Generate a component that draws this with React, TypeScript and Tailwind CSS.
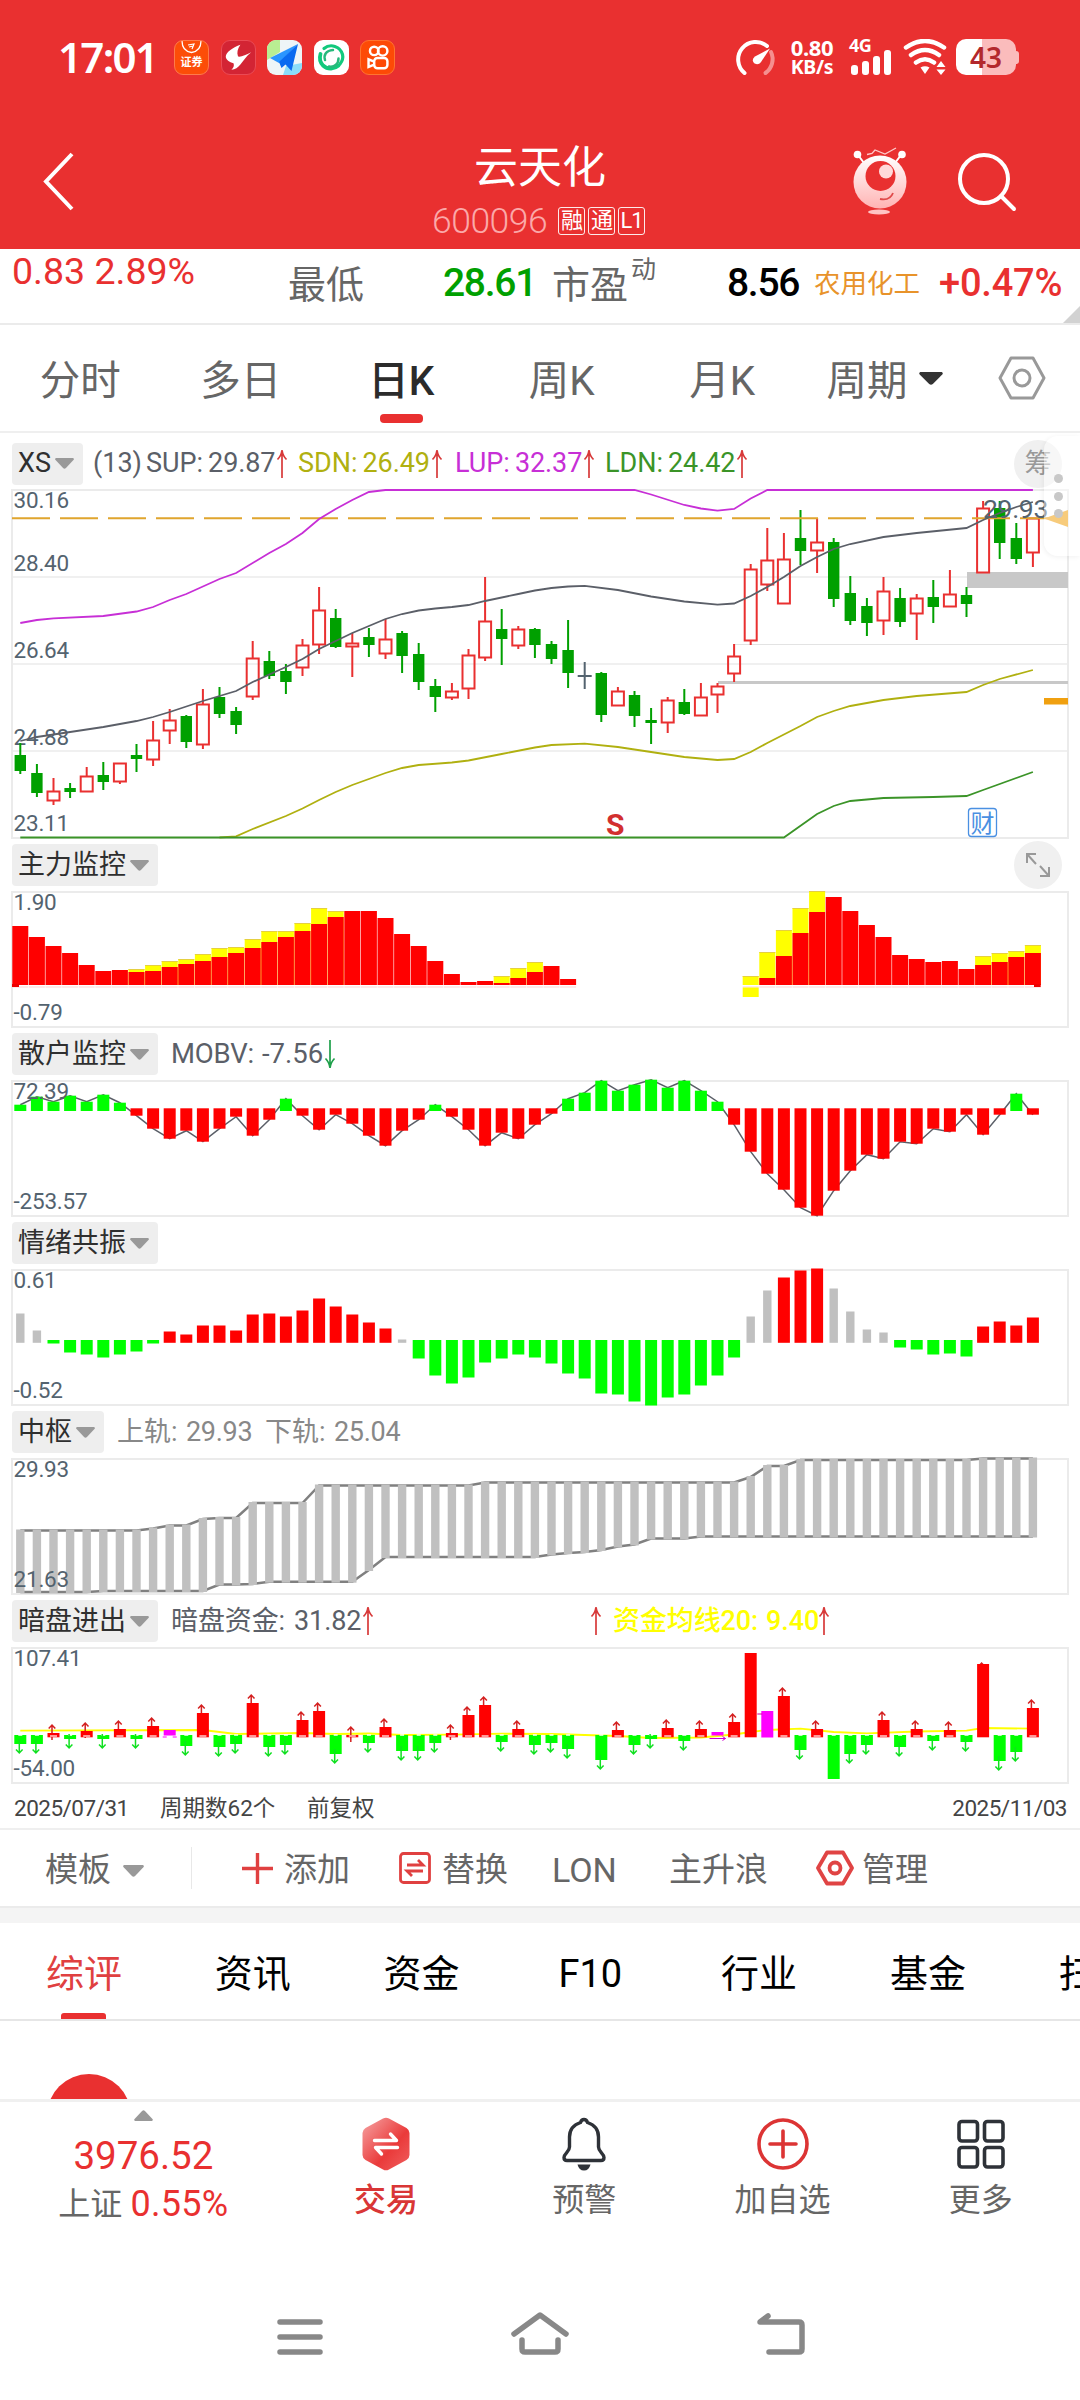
import React from 'react';

const UP = '#e93030';
const DOWN = '#00a000';
const LIME = '#00ff00';

// x center of the i-th bar
const cx = (i: number) => 20.3 + i * 16.6;

type Candle = [string, number, number, number, number];

// color, high, body top, body bottom, low
const candles: Candle[] = [
  ['g', 253, 265, 281, 284], ['g', 274, 283, 303, 307], ['r', 288, 301, 311, 315], ['g', 293, 298, 302, 308],
  ['r', 277, 286, 302, 302], ['g', 272, 285, 292, 300], ['r', 273, 273, 292, 294], ['g', 254, 265, 269, 282],
  ['r', 231, 250, 270, 276], ['r', 219, 230, 241, 254], ['g', 225, 226, 252, 258], ['r', 199, 214, 255, 259],
  ['g', 197, 207, 224, 228], ['g', 217, 221, 235, 244], ['r', 151, 168, 207, 210], ['g', 161, 171, 186, 189],
  ['g', 174, 181, 192, 204], ['r', 149, 155, 178, 186], ['r', 97, 120, 155, 164], ['g', 119, 128, 157, 158],
  ['r', 143, 153, 157, 187], ['g', 138, 147, 155, 167], ['r', 129, 149, 164, 169], ['g', 141, 143, 166, 183],
  ['g', 153, 164, 192, 200], ['g', 189, 196, 207, 222], ['r', 193, 201, 208, 210], ['r', 159, 165, 199, 209],
  ['r', 87, 131, 168, 171], ['g', 119, 139, 149, 175], ['r', 136, 139, 156, 159], ['g', 138, 139, 155, 168],
  ['g', 151, 154, 169, 174], ['g', 130, 160, 183, 198], ['n', 172, 185, 187, 199], ['g', 182, 183, 225, 232],
  ['r', 197, 201, 216, 216], ['g', 201, 205, 226, 237], ['g', 218, 230, 233, 254], ['r', 207, 210, 233, 243],
  ['g', 199, 212, 224, 225], ['r', 193, 207, 226, 226], ['r', 193, 196, 205, 223], ['r', 154, 166, 184, 192],
  ['r', 74, 79, 151, 155], ['r', 38, 70, 95, 101], ['r', 43, 69, 114, 114], ['g', 20, 48, 61, 75],
  ['r', 28, 52, 61, 83], ['g', 48, 52, 109, 117], ['g', 86, 103, 131, 135], ['g', 108, 116, 133, 146],
  ['r', 87, 101, 131, 145], ['g', 98, 108, 132, 137], ['r', 104, 108, 124, 150], ['g', 90, 107, 117, 133],
  ['r', 80, 104, 117, 117], ['g', 97, 105, 114, 127], ['r', 11, 18, 83, 83], ['g', 11, 18, 53, 69],
  ['g', 33, 48, 69, 74], ['r', 28, 28, 63, 77],
];

type Pt = [number, number];

const sup: Pt[] = [
  [0, 251], [1, 247], [3, 242], [5, 237], [7, 231], [8, 227], [9, 222], [11, 211], [13, 201], [14, 192], [16, 177], [17, 169],
  [18, 159], [19, 151], [20, 143], [22, 129], [23, 124], [24, 120.5], [25, 118.5], [26, 117], [27, 115], [28, 111], [30, 104],
  [31, 100.5], [32, 98], [33, 96.5], [34, 95.8], [36, 100], [38, 106.5], [40, 111.5], [42, 114.6], [43, 113.5], [44, 106], [45, 97],
  [46, 87], [47, 76], [48, 67], [49, 59], [50, 54], [52, 47], [54, 43], [57, 38], [58, 30], [59, 23], [60, 17], [61, 12],
];
const lup: Pt[] = [
  [0, 133], [1, 130], [2, 128.3], [5, 126], [7, 121.5], [8, 117], [9, 110], [10, 104], [12, 89], [13, 83], [15, 63], [16, 54],
  [17, 43], [18, 29], [19, 19], [20, 10], [21, 2], [22, 0], [37, 0], [38, 4.5], [40, 15], [41, 18.5], [42, 20.7], [43, 19],
  [44, 8.5], [45, 0], [61, 0],
];
const sdn: Pt[] = [
  [12, 347.5], [13, 346.3], [14, 339], [16, 326], [17, 318.5], [18, 310], [19, 302], [20, 295], [21, 289], [22, 283], [23, 278],
  [24, 275], [26, 272.5], [27, 270.5], [29, 264], [31, 257.5], [32, 255], [34, 253.7], [36, 257], [38, 262], [40, 267], [42, 270],
  [43, 269], [44, 262], [45, 253], [47, 236], [48, 227], [49, 221], [50, 216], [52, 210], [54, 206], [57, 202], [58, 195],
  [59, 189], [61, 180],
];
const ldn: Pt[] = [
  [0, 347.5], [46, 347.5], [48, 324], [49, 316], [50, 311], [52, 308], [55, 307], [57, 306], [58, 300], [59, 294], [61, 282],
];

// [index, red height, yellow height]
const mainForce: [number, number, number][] = [
  [0, 59, 0], [1, 48, 0], [2, 39, 0], [3, 32, 0], [4, 20, 0], [5, 14, 0], [6, 15, 0], [7, 13, 16], [8, 14, 20], [9, 18, 24],
  [10, 21, 26], [11, 24, 31], [12, 28, 37], [13, 32, 38], [14, 37, 46], [15, 43, 54], [16, 48, 54], [17, 54, 62], [18, 61, 77],
  [19, 68, 74], [20, 74, 0], [21, 74, 0], [22, 67, 0], [23, 51, 0], [24, 39, 0], [25, 24, 0], [26, 11, 0], [27, 3, 0], [28, 4, 0],
  [29, 2, 9], [30, 7, 17], [31, 13, 23], [32, 19, 0], [33, 6, 0], [44, 0, 9], [45, 7, 33], [46, 29, 55], [47, 52, 77],
  [48, 73, 94], [49, 88, 0], [50, 74, 0], [51, 60, 0], [52, 48, 0], [53, 30, 0], [54, 26, 0], [55, 23, 0], [56, 24, 0],
  [57, 16, 0], [58, 20, 29], [59, 23, 32], [60, 28, 34], [61, 32, 40],
];

const mobv = [
  5, 13, 8, 14, 8, 15, 7, -6, -19, -29, -21, -32, -19, -7, -26, -10, 11, -6, -20, -5, -14, -26, -36, -21, -10, 5, -7, -20, -36,
  -23, -29, -15, -4, 11, 17, 29, 19, 25, 30, 22, 29, 19, 8, -15, -42, -64, -80, -98, -106, -81, -61, -45, -49, -32, -34, -19,
  -22, -5, -25, -5, 16, -5,
];

const mood = [
  28, 11, -2, -11, -13, -16, -13, -10, -2, 10, 7, 16, 16, 11, 27, 28, 25, 31, 43, 35, 27, 19, 13, 2, -17, -34, -42, -36, -21,
  -17, -13, -16, -22, -32, -37, -52, -53, -60, -64, -56, -53, -44, -34, -16, 25, 51, 64, 71, 73, 53, 30, 12, 9, -6, -8, -13,
  -12, -15, 15, 20, 16, 24,
];
const moodGray = [0, 1, 23, 44, 45, 49, 50, 51, 52];

// runs of [last index, y]
const upperRuns: Pt[] = [[7, 71.5], [8, 69.5], [10, 66.5], [11, 60], [13, 59], [17, 44], [27, 26.5], [43, 23.5], [44, 18], [46, 7], [57, 1], [61, -0.5]];
const lowerRuns: Pt[] = [[4, 133], [11, 132], [13, 125.5], [14, 125], [20, 122.7], [21, 111], [31, 98], [32, 95.5], [33, 94], [34, 93], [35, 91], [36, 87.5], [37, 85.5], [40, 79.5], [61, 77.5]];
const expand = (runs: Pt[]) => Array.from({ length: 62 }, (_, i) => runs.find(([end]) => i <= end)![1]);

const dark = [
  -8, -8, 3, -3, 5, -3, 7, -3, 10, 6, -10, 23, -11, -8, 33, -11, -9, 16, 25, -18, 1, -7, 9, -15, -15, -7, 3, 21, 31, -6, 7, -9,
  -7, -13, 0, -24, 6, -9, -3, 8, -5, 7, 4, 14, 83, 25, 40, -14, 7, -43, -18, -9, 16, -11, 7, -5, 6, -6, 72, -25, -16, 28,
];
const darkMa: Pt[] = [
  [0, 82.7], [11, 82], [12, 84], [13, 86], [17, 85], [19, 86], [21, 85.5], [23, 87], [26, 86.7], [29, 85.7], [32, 86], [34, 87],
  [36, 88], [38, 90], [41, 89.5], [43, 86.5], [44, 84], [45, 82], [47, 80.7], [49, 84], [51, 85.3], [54, 83.5], [57, 82.7],
  [58, 80], [61, 80.7],
];

const toPoints = (pts: Pt[]) => pts.map(([i, y]) => `${cx(i)},${y}`).join(' ');

const Caret = ({ className = 'text-[#999]', w = 19, h = 11 }: { className?: string; w?: number; h?: number }) => (
  <svg width={w} height={h} viewBox="0 0 20 12" preserveAspectRatio="none" className={className}>
    <path d="M1 0h18q1.5 1 .4 2.300L11.500 11q-1.500 1.500-3 0L.6 2.300Q-.5 1 1 0z" fill="currentColor" />
  </svg>
);

const Arrow = ({ down = false }: { down?: boolean }) => (
  <svg width="12" height="30" viewBox="0 0 12 30" className={down ? 'rotate-180 text-[#1fa04b]' : 'text-[#d83a3a]'}>
    <path d="M6 1v28M1.500 10.500C4 8 5.500 5 6 1c.5 4 2 7 4.500 9.500" fill="none" stroke="currentColor" strokeWidth="1.700" />
  </svg>
);

const Chip = ({ text }: { text: string }) => (
  <div className="ml-3 flex h-[42px] shrink-0 items-center gap-1 rounded-[4px] bg-[#eeeeee] pr-[9px] pl-[6px] text-[27px] text-[#2f2f2f]">
    <span>{text}</span>
    <Caret />
  </div>
);

const Frame = ({ h, top, bottom, children }: { h: number; top: string; bottom: string; children: React.ReactNode }) => (
  <svg width="1080" height={h} viewBox={`0 0 1080 ${h}`} className="block overflow-visible">
    <rect x="12" y="0" width="1056" height={h} fill="none" stroke="#ebebeb" strokeWidth="2" />
    {children}
    <g fill="#54636f" fontSize="22.500" letterSpacing="-0.200">
      <text x="13.500" y="18">{top}</text>
      <text x="13.500" y={h - 7}>{bottom}</text>
    </g>
  </svg>
);

interface PanelProps {
  name: string;
  top: string;
  bottom: string;
  legend?: React.ReactNode;
  extra?: React.ReactNode;
  children: React.ReactNode;
}

const Panel: React.FC<PanelProps> = ({ name, top, bottom, legend, extra, children }) => (
  <section className="h-[189px] pt-[6px]">
    <div className="mb-[6px] flex items-center">
      <Chip text={name} />
      {legend}
      {extra}
    </div>
    <Frame h={135} top={top} bottom={bottom}>{children}</Frame>
  </section>
);

const StatusBar = () => (
  <div className="flex h-[114px] items-center pl-[58px] text-white">
    <span className="w-[116px] font-['Noto_Sans'] text-[42px] leading-none font-semibold tracking-[-1.700px]">17:01</span>
    <div className="flex gap-[11.500px]">
      <div className="flex h-[35px] w-[35px] flex-col items-center overflow-hidden rounded-[9px] border border-[#ff7a4a] bg-[#fc4d08]">
        <svg width="21" height="14" viewBox="0 0 21 14" className="shrink-0">
          <path d="M1 0q0 10 9.500 11.500Q20 10 20 0" fill="none" stroke="#fff" strokeWidth="1.300" />
          <path d="M7 4l6-1-2 5M8 6l4-1" fill="none" stroke="#fff" strokeWidth="1.200" />
        </svg>
        <span className="text-[11px] leading-[15px] font-bold">证券</span>
      </div>
      <div className="flex h-[35px] w-[35px] rounded-[9px] border border-[#ea4a55] bg-[#d32434]">
        <svg width="33" height="33" viewBox="0 0 35 35">
          <path d="M19.500 4C16.500 8.500 15.500 12 17 16.500c4 .5 8-1.500 14-4.500-5.500 4.500-8 8.500-11.500 13-2.500 3-5.500 5.500-9.500 5.500 2.200-2 3.200-4.500 2.200-7C8 22.500 4 20 4 16.500 4 12 12 6.500 19.500 4z" fill="#fff" />
        </svg>
      </div>
      <div className="h-[35px] w-[35px] overflow-hidden rounded-[9px] bg-[#eef5f7]">
        <svg width="35" height="35" viewBox="0 0 35 35">
          <path d="M0 0h13v12L0 20z" fill="#b9ee92" />
          <path d="M16 35l3-9 16-3v12z" fill="#8bdcf9" />
          <path d="M31 4L3 18l9 5z" fill="#2a95ff" />
          <path d="M31 4L12 22l2.500 6 4-3.500 6 6.500z" fill="#0a6af0" />
        </svg>
      </div>
      <div className="h-[35px] w-[35px] rounded-[9px] bg-white">
        <svg width="35" height="35" viewBox="0 0 35 35" fill="none" stroke="#12c97c" strokeLinecap="round">
          <path d="M10 8.500a11.500 11.500 0 0 1 18.500 6c1 4-.5 7-2.500 9.500" strokeWidth="3.200" />
          <path d="M6.500 14a12 12 0 0 0 2.500 11.500c5 4.500 11.500 3.500 15.500 0" strokeWidth="3.800" />
          <path d="M11 20c-1.500-5 1-9.500 8-10M15 26.500c6 1 9.500-3 9.500-8" strokeWidth="2.500" stroke="#27b97b" />
        </svg>
      </div>
      <div className="h-[35px] w-[35px] rounded-[9px] border border-[#ff7430] bg-[#fd4a06]">
        <svg width="33" height="33" viewBox="0 0 35 35" fill="none" stroke="#fff" strokeWidth="2.600">
          <circle cx="14" cy="10.500" r="4.500" />
          <circle cx="23" cy="10.500" r="5" />
          <rect x="14" y="18" width="14" height="11" rx="3.500" />
          <path d="M14 22l-6-2.500v8l6-2.500" />
        </svg>
      </div>
    </div>
    <svg width="41" height="37" viewBox="0 0 41 37" className="ml-[340px]" fill="none" strokeLinecap="round">
      <path d="M9.500 34A17 17 0 1 1 32 7" stroke="#fff" strokeWidth="4" />
      <path d="M36 13a17 17 0 0 1-5.500 21" stroke="#f58f8f" strokeWidth="4" />
      <path d="M35 9.500L26 23c-2 3-5.500 2.500-7 1-1.800-2-1.500-4.500 1-6.500z" fill="#fff" />
    </svg>
    <div className="ml-[11px] w-[50px] text-center font-['Noto_Sans'] font-bold">
      <div className="text-[22px] leading-[19px] tracking-[-0.300px]">0.80</div>
      <div className="text-[19.500px] leading-[19px] tracking-[-0.300px]">KB/s</div>
    </div>
    <div className="relative ml-[14px] h-[36px] w-[40px]">
      <span className="absolute -top-px -left-[2px] font-['Noto_Sans'] text-[18px] leading-[15px] font-bold tracking-tight">4G</span>
      <svg width="40" height="36" viewBox="0 0 40 36" fill="#fff">
        <rect x="0" y="26" width="7" height="10" rx="3" />
        <rect x="11" y="22" width="7" height="14" rx="3" />
        <rect x="22" y="17" width="7" height="19" rx="3" />
        <rect x="33" y="11" width="7" height="25" rx="3" />
      </svg>
    </div>
    <svg width="46" height="36" viewBox="0 0 46 36" className="ml-[12px]" fill="none" stroke="#fff" strokeWidth="4.500" strokeLinecap="round">
      <path d="M3 8.500q19-13 38 0M8 16q14-10 28 0M13 23.500q9-6.500 18 0" />
      <path d="M17.500 28.500q4.500-2.500 9 0L22 35z" fill="#fff" stroke="none" />
      <path d="M33.500 28l4.500-6 4.500 6zM33.500 30.500h9L38 36z" fill="#fff" stroke="none" />
    </svg>
    <div className="ml-[7px] flex h-[36px] w-[60px] items-center justify-center rounded-[10px] bg-[linear-gradient(90deg,#fff_43%,#fbbcbc_43%)] font-['Noto_Sans'] text-[28px] leading-none font-semibold text-[#b3282c]">43</div>
    <div className="h-[13px] w-[3px] rounded-r-[3px] bg-[#fbbcbc]" />
  </div>
);

const Robot = () => (
  <svg width="56" height="72" viewBox="0 0 56 72" className="mt-px">
    <defs>
      <linearGradient id="body" x1="0" y1="0" x2="0" y2="1">
        <stop offset="0" stopColor="#ffffff" />
        <stop offset="1" stopColor="#ffb3b3" />
      </linearGradient>
    </defs>
    <path d="M15 8.500l5-1 3-3.500 10 4L44 2" fill="none" stroke="#ffc9c9" strokeWidth="1.300" />
    <path d="M6 9l6 8M49 9l-6 8" stroke="#fff" strokeWidth="2" />
    <circle cx="5.500" cy="8.500" r="3.800" fill="#fff" />
    <circle cx="50" cy="8.500" r="3.800" fill="#fff" />
    <circle cx="28" cy="36" r="26.500" fill="url(#body)" />
    <circle cx="28.500" cy="30" r="15" fill={UP} />
    <circle cx="34" cy="25.500" r="7" fill="#ffd9d9" />
    <path d="M28 53q10 2 13-6" fill="none" stroke="#e04a4a" strokeWidth="1.800" />
    <ellipse cx="27" cy="66" rx="11" ry="2.500" fill="#ffc4c4" />
  </svg>
);

const TitleBar = () => (
  <div className="flex h-[135px] items-start text-white">
    <svg width="34" height="60" viewBox="0 0 34 60" className="mt-[37px] ml-[42px]">
      <path d="M30 3L4 30.500 30 58" fill="none" stroke="#fff" strokeWidth="4" />
    </svg>
    <div className="ml-[269px] flex w-[390px] flex-col items-center">
      <div className="mt-[27px] text-[44px] leading-[54px]">云天化</div>
      <div className="mt-[8px] flex items-center self-start pl-[87px]">
        <span className="w-[126px] text-[35.500px] leading-[36px] font-light tracking-[-0.500px] text-[#fba9a9]">600096</span>
        <div className="flex gap-[3px] text-[22px] leading-none">
          {['融', '通', 'L1'].map((t) => (
            <span key={t} className="flex h-[28px] w-[27px] items-center justify-center rounded-[3px] border-[1.500px] border-white/90 tracking-[-1px]">{t}</span>
          ))}
        </div>
      </div>
    </div>
    <div className="mt-[31px] ml-[117px]"><Robot /></div>
    <svg width="62" height="62" viewBox="0 0 62 62" className="mt-[37px] ml-[48px]" fill="none" stroke="#fff" strokeWidth="4" strokeLinecap="round">
      <circle cx="28" cy="28" r="24" />
      <path d="M45 45l13 13" />
    </svg>
  </div>
);

const QuoteRow = () => (
  <div className="relative flex h-[76px] shrink-0 overflow-hidden border-b-2 border-[#ebebeb] bg-white text-[38px] leading-[72px] whitespace-nowrap text-[#666]">
    <span className="w-[288px] pl-[12px] text-[37.500px] leading-[45px] text-[#e93030]">0.83 2.89%</span>
    <span className="w-[155px]">最低</span>
    <span className="w-[109px] text-[39px] leading-[68px] font-medium tracking-[-1.300px] text-[#00a000]">28.61</span>
    <span className="w-[79px]">市盈</span>
    <span className="w-[96px] text-[25px] leading-[41px]">动</span>
    <span className="w-[87px] text-[39px] leading-[68px] font-medium tracking-[-1.300px] text-black">8.56</span>
    <span className="w-[125px] text-[26.500px] leading-[70px] text-[#e8932a]">农用化工</span>
    <span className="text-[38px] leading-[68px] font-medium tracking-[-0.200px] text-[#e93030]">+0.47%</span>
    <svg width="17" height="17" viewBox="0 0 17 17" className="absolute right-0 bottom-0">
      <path d="M17 0v17H0z" fill="#d2d2d2" />
    </svg>
  </div>
);

const periods = ['分时', '多日', '日K', '周K', '月K'];

const PeriodTabs = () => (
  <div className="flex h-[108px] shrink-0 items-center border-b-2 border-[#efefef] pr-[34px] text-[40.500px] text-[#666]">
    {periods.map((p) => (
      <div key={p} className={p === '日K' ? 'relative flex h-full w-[160.500px] items-center justify-center pt-[7px] font-medium text-[#2b2b2b]' : 'flex h-full w-[160.500px] items-center justify-center pt-[7px]'}>
        {p}
        {p === '日K' && <span className="absolute bottom-[8px] h-[9px] w-[43px] rounded-[4px] bg-[#e93030]" />}
      </div>
    ))}
    <span className="ml-[24px] pt-[7px]">周期</span>
    <Caret className="ml-[11px] text-[#333]" w={24} h={13} />
    <svg width="48" height="44" viewBox="0 0 48 44" className="ml-auto" fill="none" stroke="#999" strokeWidth="3">
      <path d="M13 2h22l11 20-11 20H13L2 22z" strokeLinejoin="round" />
      <circle cx="24" cy="22" r="8" />
    </svg>
  </div>
);

const legend = [
  { k: 'SUP:', v: '29.87', row: 'w-[152px] text-[#5b5f68]' },
  { k: 'SDN:', v: '26.49', row: 'w-[157px] text-[#b0b010]' },
  { k: 'LUP:', v: '32.37', row: 'w-[150px] text-[#c72fd6]' },
  { k: 'LDN:', v: '24.42', row: 'w-[152px] text-[#3b9428]' },
];

const MainChart = () => (
  <section className="relative">
    <div className="flex h-[57px] items-center pt-1 text-[27px]">
      <Chip text="XS" />
      <span className="ml-[10px] w-[53px] text-[#5b5f68]">(13)</span>
      {legend.map((l) => (
        <div key={l.k} className={'flex shrink-0 items-center ' + l.row}>
          <span>{l.k}</span>
          <span className="ml-[5px] mr-px tracking-[-0.100px]">{l.v}</span>
          <Arrow />
        </div>
      ))}
    </div>
    <Frame h={348} top="30.16" bottom="23.11">
      {[87, 174, 261].map((y) => <path key={y} d={`M12 ${y}H1068`} stroke="#ebebeb" strokeWidth="1.500" />)}
      <g fill="#54636f" fontSize="22.500" letterSpacing="-0.200">
        <text x="13.500" y="80.500">28.40</text>
        <text x="13.500" y="167.500">26.64</text>
        <text x="13.500" y="254.500">24.88</text>
      </g>
      <path d="M735 154.500H1068" stroke="#e3e3e3" />
      <rect x="967" y="82" width="101" height="16" fill="#c8c8c8" />
      <rect x="718" y="191" width="350" height="3" fill="#c8c8c8" />
      <rect x="1044" y="208" width="24" height="6.500" fill="#f0a010" />
      {candles.map(([c, hi, t, b, lo], i) => {
        const x = cx(i);
        if (c === 'r') {
          return (
            <g key={i} stroke={UP} strokeWidth="2" fill="none">
              <path d={`M${x} ${hi}V${t}M${x} ${b}V${lo}`} />
              <rect x={x - 6} y={t + 0.5} width="12" height={Math.max(b - t - 1, 2)} />
            </g>
          );
        }
        const col = c === 'n' ? '#54636f' : DOWN;
        const half = c === 'n' ? 7 : 5.7;
        return (
          <g key={i} fill={col}>
            <rect x={x - 1} y={hi} width="2" height={lo - hi} />
            <rect x={x - half} y={t} width={half * 2} height={Math.max(b - t, 2)} />
          </g>
        );
      })}
      <path d="M12 28.300H1052" stroke="#e0a52e" strokeWidth="2" strokeDasharray="38 10" />
      <g fill="none" strokeWidth="1.800">
        <polyline points={toPoints(sup)} stroke="#5b5f68" />
        <polyline points={toPoints(lup)} stroke="#c72fd6" />
        <polyline points={toPoints(sdn)} stroke="#b0b010" />
        <polyline points={toPoints(ldn)} stroke="#3b9428" />
      </g>
      <text x="983" y="28" fill="#54636f" fontSize="26.500" letterSpacing="-0.300">29.93</text>
      <path d="M1044 28.500L1068 20v17z" fill="#f0a010" />
      <text x="606" y="345" fill="#d22f2f" fontSize="30" fontWeight="700">S</text>
      <rect x="968.500" y="318.500" width="28" height="28" rx="3" fill="#fff" stroke="#4a90e2" strokeWidth="1.300" />
      <text x="970.500" y="342" fill="#4a90e2" fontSize="24">财</text>
    </Frame>
    {/* Chip-distribution button and the drag handle over it */}
    <div className="absolute top-[7px] left-[1014px] flex h-[48px] w-[48px] items-center justify-center rounded-full bg-[#f0f0f0] text-[27px] text-[#999]">筹</div>
    <div className="absolute top-[3px] left-[1044px] flex h-[120px] w-[36px] flex-col items-center gap-[8.500px] rounded-l-[14px] bg-white/45 pt-[38px] pr-[8px] shadow-[-1px_1px_5px_rgba(0,0,0,0.06)]">
      {[0, 1, 2].map((d) => <span key={d} className="h-[9px] w-[9px] shrink-0 rounded-full bg-[#c8c8c8]" />)}
    </div>
  </section>
);

const MainForcePanel = () => (
  <Panel
    name="主力监控"
    top="1.90"
    bottom="-0.79"
    extra={
      <div className="-my-1 mr-[18px] ml-auto flex h-[48px] w-[48px] items-center justify-center rounded-full bg-[#f0f0f0]">
        <svg width="26" height="26" viewBox="0 0 26 26" fill="none" stroke="#999" strokeWidth="2">
          <path d="M11 2H2v9M2 2l9 10M15 24h9v-9M24 24l-9-10" />
        </svg>
      </div>
    }
  >
    {mainForce.map(([i, r, y]) => {
      const x = cx(i) - 8;
      return (
        <g key={i}>
          {y > 0 && <rect x={x} y={93 - y} width="16" height={y} fill="#ffff00" />}
          {y > 0 && <rect x={x} y={93 - y} width="16" height="1" fill="#e5d040" />}
          {r > 0 && <rect x={x} y={93 - r} width="16" height={r} fill="#ff0000" />}
          <rect x={x} y="94.500" width="16" height="1" fill="#ffd3d3" />
        </g>
      );
    })}
    <rect x={cx(44) - 8} y="95.500" width="16" height="9.500" fill="#ffff00" />
    <path d="M12 92h7v3h-7zM1034 92h6.700v3h-6.700z" fill="#ee0000" />
  </Panel>
);

const MobvPanel = () => (
  <Panel
    name="散户监控"
    top="72.39"
    bottom="-253.57"
    legend={
      <div className="ml-[13px] flex items-center text-[27.500px] text-[#5b5f68]">
        <span className="w-[91px] tracking-[-0.200px]">MOBV:</span>
        <span className="mr-px">-7.56</span>
        <Arrow down />
      </div>
    }
  >
    <polyline points={mobv.map((v, i) => `${cx(i)},${28.7 - v}`).join(' ')} fill="none" stroke="#5b5f68" strokeWidth="1.500" />
    {mobv.map((v, i) =>
      v > 0
        ? <rect key={i} x={cx(i) - 6} y={28.7 - v} width="12" height={v + 1.3} fill={LIME} />
        : <rect key={i} x={cx(i) - 6} y="27.300" width="12" height={1.4 - v} fill="#ff0000" />
    )}
  </Panel>
);

const MoodPanel = () => (
  <Panel name="情绪共振" top="0.61" bottom="-0.52">
    {mood.map((v, i) => {
      const gray = moodGray.includes(i);
      const w = gray ? 8.4 : 12;
      return v > 0
        ? <rect key={i} x={cx(i) - w / 2} y={71.5 - v} width={w} height={v + 1.3} fill={gray ? '#c0c0c0' : '#ff0000'} />
        : <rect key={i} x={cx(i) - w / 2} y="70" width={w} height={1.5 - v} fill={LIME} />;
    })}
  </Panel>
);

const PivotPanel = () => {
  const hi = expand(upperRuns);
  const lo = expand(lowerRuns);
  return (
    <Panel
      name="中枢"
      top="29.93"
      bottom="21.63"
      legend={
        <div className="ml-[13px] flex items-center text-[27px] text-[#888]">
          <span className="w-[69px]">上轨:</span>
          <span className="w-[79px] tracking-[-0.300px]">29.93</span>
          <span className="w-[69px]">下轨:</span>
          <span className="tracking-[-0.300px]">25.04</span>
        </div>
      }
    >
      <g fill="none" stroke="#808080" strokeWidth="2.500">
        <polyline points={hi.map((y, i) => `${cx(i)},${y}`).join(' ')} />
        <polyline points={lo.map((y, i) => `${cx(i)},${y}`).join(' ')} />
      </g>
      {hi.map((y, i) => <rect key={i} x={cx(i) - 4.2} y={y - 1} width="8.400" height={lo[i] - y + 2} fill="#c0c0c0" />)}
    </Panel>
  );
};

const DarkPanel = () => (
  <Panel
    name="暗盘进出"
    top="107.41"
    bottom="-54.00"
    legend={
      <div className="ml-[13px] flex items-center text-[27px] tracking-[-0.100px] text-[#5b5f68]">
        <span className="w-[123px]">暗盘资金:</span>
        <span className="w-[68px]">31.82</span>
        <Arrow />
        <span className="ml-[216px]"><Arrow /></span>
        <span className="ml-[11px] w-[153px] font-medium text-[#ffff00]">资金均线20:</span>
        <span className="w-[52px] font-medium text-[#ffff00]">9.40</span>
        <Arrow />
      </div>
    }
  >
    <polyline points={toPoints(darkMa)} fill="none" stroke="#ffff00" strokeWidth="1.800" />
    {dark.map((v, i) => {
      const x = cx(i);
      if (v === 0) return null;
      if (i === 9 || i === 42 || i === 45) {
        return (
          <g key={i} fill="#ff00ff">
            <rect x={x - 6} y={88 - v} width="12" height={v + (i === 45 ? 1.500 : -0.5)} />
            {i === 9 && <path d={`M${x - 7} 88.500h4v1h-4zM${x + 3} 88.500h4v1h-4z`} />}
            {i === 42 && <path d={`M${x - 8} 90.500h16M${x + 5} 88.500l3 2-3 2`} fill="none" stroke="#d000d0" />}
            {i === 45 && <path d={`M${x - 10} ${91 - v}h5`} stroke="#d000a0" />}
          </g>
        );
      }
      if (v > 0) {
        const tip = Math.max(88 - v - 8, 15);
        const ax = x - 1.5;
        return (
          <g key={i}>
            {i !== 44 && (
              <path d={`M${ax} ${tip}v15M${ax - 3.3} ${tip + 3.5}L${ax} ${tip}l3.300 3.500`} fill="none" stroke="#d42020" strokeWidth="1.500" />
            )}
            <rect x={x - 6} y={88 - v} width="12" height={v + 1.3} fill="#ff0000" />
            {v < 50 && <path d={`M${x - 3.5} 88h7`} stroke="#fff" strokeWidth="1.200" />}
          </g>
        );
      }
      const tip = 88 - v + 9;
      const ax = x - 1;
      return (
        <g key={i}>
          <rect x={x - 6} y="87" width="12" height={1 - v} fill={LIME} />
          <path d={`M${x - 2} 87h4`} stroke="#fff" strokeWidth="1.500" />
          {i !== 49 && (
            <path d={`M${ax} ${tip}v-14M${ax - 3.3} ${tip - 3.5}L${ax} ${tip}l3.300-3.500`} fill="none" stroke="#10e020" strokeWidth="1.500" />
          )}
        </g>
      );
    })}
  </Panel>
);

const Hex = () => (
  <svg width="38" height="36" viewBox="0 0 38 36" fill="none" stroke="#e04444" strokeWidth="3.800">
    <path d="M11 2.500h16l9 15.500-9 15.500H11L2 18z" strokeLinejoin="round" />
    <circle cx="19" cy="18" r="5.500" />
  </svg>
);

const Toolbar = () => (
  <div className="flex h-[78px] shrink-0 items-center border-b-2 border-[#ebebeb] text-[33px] text-[#666]">
    <span className="ml-[45px] pt-1">模板</span>
    <Caret className="mt-[5px] ml-[12px] text-[#999]" w={21} h={12} />
    <span className="ml-[47px] h-[42px] w-px bg-[#e8e8e8]" />
    <svg width="31" height="31" viewBox="0 0 31 31" className="ml-[50px]" stroke="#e04040" strokeWidth="3.400">
      <path d="M15.500 0v31M0 15.500h31" />
    </svg>
    <span className="ml-[11px] w-[67px] pt-1">添加</span>
    <svg width="32" height="32" viewBox="0 0 32 32" className="ml-[48px]" fill="none" stroke="#e04040" strokeWidth="2.800">
      <rect x="1.500" y="1.500" width="29" height="29" rx="3" />
      <path d="M8 13h16l-5-5M24 19H8l5 5" />
    </svg>
    <span className="ml-[11px] w-[66px] pt-1">替换</span>
    <span className="ml-[44px] w-[74px] pt-1 text-[34px]">LON</span>
    <span className="ml-[43px] w-[99px] pt-1">主升浪</span>
    <span className="mr-[8px] ml-[48px]"><Hex /></span>
    <span className="pt-1">管理</span>
  </div>
);

const infoTabs = ['综评', '资讯', '资金', 'F10', '行业', '基金', '扫雷'];

const InfoTabs = () => (
  <div className="flex h-[98px] shrink-0 overflow-hidden border-b-2 border-[#e6e6e6] bg-white text-[38px] text-black">
    {infoTabs.map((t, i) => (
      <div key={t} className="relative flex h-full w-[168.800px] shrink-0 items-center justify-center pt-[6px] pr-px">
        <span className={i === 0 ? 'text-[#e04040]' : ''}>{t}</span>
        {i === 0 && <span className="absolute bottom-0 h-[6px] w-[45px] rounded-t-[3px] bg-[#e93030]" />}
      </div>
    ))}
  </div>
);

const actions = [
  {
    label: '交易',
    color: 'text-[#d93636] font-medium',
    icon: (
      <svg width="48" height="54" viewBox="0 0 48 54">
        <defs>
          <linearGradient id="hexfill" x1="0" y1="0" x2="1" y2="1">
            <stop offset="0" stopColor="#f6a5a5" />
            <stop offset="0.600" stopColor="#ea3a3a" />
            <stop offset="1" stopColor="#f06060" />
          </linearGradient>
        </defs>
        <path d="M21 1.500q3-1.700 6 0L44.500 11Q47.500 13 47.500 16v22q0 3-3 5L27 52.500q-3 1.700-6 0L3.500 43Q.5 41 .5 38V16q0-3 3-5z" fill="url(#hexfill)" />
        <path d="M12.500 23.500h22l-6-6.500M35.500 30.500h-22l6 6.500" fill="none" stroke="#fff" strokeWidth="3.400" strokeLinecap="round" strokeLinejoin="round" />
      </svg>
    ),
  },
  {
    label: '预警',
    color: 'text-[#666]',
    icon: (
      <svg width="48" height="54" viewBox="0 0 48 54">
        <path d="M24 2.500c2 0 3 1.500 3.500 3C35 8 38.500 13.500 38.500 20v10c0 5 5.500 6.500 5.500 10.500q0 3-3 3H7q-3 0-3-3C4 36.500 9.500 35 9.500 30V20c0-6.500 3.500-12 11-14.500.5-1.500 1.500-3 3.500-3z" fill="none" stroke="#2e3238" strokeWidth="3.400" />
        <path d="M17.500 47.500h13q-1.500 6-6.500 6t-6.500-6z" fill="#2e3238" />
      </svg>
    ),
  },
  {
    label: '加自选',
    color: 'text-[#666]',
    icon: (
      <svg width="54" height="54" viewBox="0 0 54 54" fill="none" stroke="#dc3434" strokeWidth="3.600">
        <circle cx="27" cy="27" r="24" />
        <path d="M27 14v26M14 27h26" strokeLinecap="round" />
      </svg>
    ),
  },
  {
    label: '更多',
    color: 'text-[#666]',
    icon: (
      <svg width="50" height="54" viewBox="0 0 50 54" fill="none" stroke="#2e3238" strokeWidth="3.600">
        <rect x="3" y="4.500" width="18.500" height="19.500" rx="3" />
        <rect x="28.500" y="4.500" width="18.500" height="19.500" rx="3" />
        <rect x="3" y="30.500" width="18.500" height="19.500" rx="3" />
        <rect x="28.500" y="30.500" width="18.500" height="19.500" rx="3" />
      </svg>
    ),
  },
];

const ActionBar = () => (
  <div className="flex h-[160px] shrink-0 border-t-[3px] border-[#f0f0f0] bg-white">
    <div className="flex w-[287px] flex-col items-center text-[#e93030]">
      <Caret className="mt-[8px] rotate-180 text-[#999]" w={19} h={11} />
      <span className="mt-[13px] text-[38.500px] leading-[44px]">3976.52</span>
      <div className="mt-[4px] flex items-center gap-[8px] text-[32px] leading-[44px]">
        <span className="text-[#666]">上证</span>
        <span className="text-[36px] tracking-[0.300px]">0.55%</span>
      </div>
    </div>
    {actions.map((a) => (
      <div key={a.label} className={'flex w-[198.300px] shrink-0 flex-col items-center pt-[15px] text-[32px] ' + a.color}>
        {a.icon}
        <span className="mt-[7px] leading-[44px]">{a.label}</span>
      </div>
    ))}
  </div>
);

const SystemNav = () => (
  <div className="flex h-[141px] items-start gap-[187px] bg-white pt-[52px] pl-[277px]">
    <svg width="46" height="46" viewBox="0 0 46 46" stroke="#888" strokeWidth="5.500" strokeLinecap="round">
      <path d="M3 11h40M3 26h40M3 41h40" />
    </svg>
    <svg width="60" height="46" viewBox="0 0 60 46" fill="none" stroke="#888" strokeWidth="5.500" strokeLinecap="round" strokeLinejoin="round">
      <path d="M4 23L30 4l26 19M12 29v9q0 3 3 3h30q3 0 3-3v-9" />
    </svg>
    <svg width="50" height="46" viewBox="0 0 50 46" fill="none" stroke="#888" strokeWidth="5.500" strokeLinecap="round" strokeLinejoin="round">
      <path d="M12 41h30q3 0 3-3V14q0-3-3-3H3l8-6" />
    </svg>
  </div>
);

export default function App() {
  return (
    <div className="flex h-[2400px] w-[1080px] flex-col overflow-hidden bg-white font-['Roboto','Noto_Sans_CJK_SC',sans-serif]">
      <header className="h-[249px] shrink-0 bg-[#e93030]">
        <StatusBar />
        <TitleBar />
      </header>
      <QuoteRow />
      <PeriodTabs />

      <main className="h-[1397px] shrink-0 leading-none">
        <MainChart />
        <MainForcePanel />
        <MobvPanel />
        <MoodPanel />
        <PivotPanel />
        <DarkPanel />
        <div className="flex h-[47px] items-center border-b-2 border-[#efefef] pt-[5px] text-[22.500px] text-[#444]">
          <span className="ml-[14px] w-[146px] tracking-[-0.500px]">2025/07/31</span>
          <span className="w-[147px]">周期数62个</span>
          <span>前复权</span>
          <span className="mr-[13px] ml-auto tracking-[-0.500px]">2025/11/03</span>
        </div>
      </main>

      <Toolbar />
      <div className="h-[15px] shrink-0 bg-[#f4f4f4]" />
      <InfoTabs />
      <div className="h-[78px] shrink-0 overflow-hidden pt-[53px] pl-[47px]">
        <div className="h-[84px] w-[84px] rounded-full bg-[#e93030]" />
      </div>
      <ActionBar />
      <SystemNav />
    </div>
  );
}
